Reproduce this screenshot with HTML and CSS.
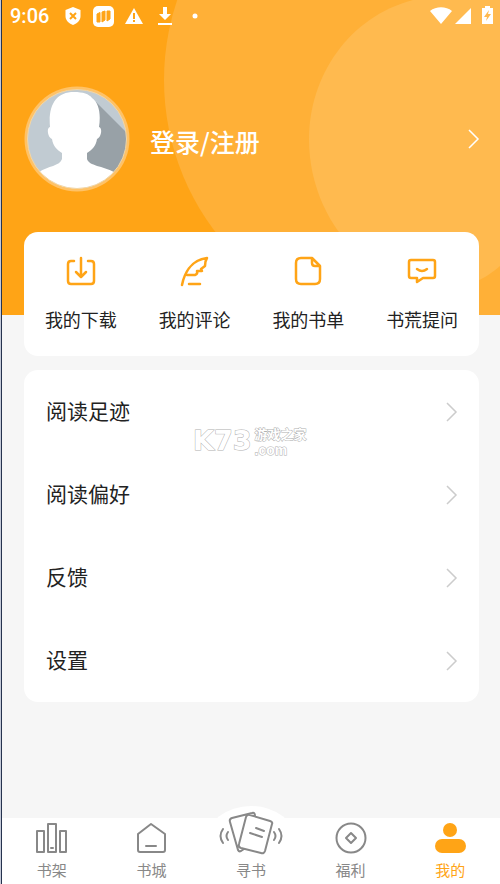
FILE: index.html
```html
<!DOCTYPE html>
<html lang="zh-CN">
<head>
<meta charset="utf-8">
<meta name="viewport" content="width=device-width, initial-scale=1">
<title>我的</title>
<link rel="stylesheet" href="styles.css">
</head>
<body>
<div class="app">
  <header class="hero">
    <svg class="hero-art" viewBox="0 0 498 315" preserveAspectRatio="xMaxYMin slice" aria-hidden="true">
      <circle cx="412" cy="80" r="250" fill="#ffb037"/>
      <path d="M411 0C346 17 307 77 307 139C307 222 370 289 442 289C465 289 484 278 498 266V0Z" fill="#ffba4f"/>
    </svg>
    <div class="status">
      <span class="time">9:06</span>
      <svg class="status-left" viewBox="0 0 140 22" aria-hidden="true">
        <path d="M9 2L16.500 5V11C16.500 15 13.500 18.500 9 20C4.500 18.500 1.500 15 1.500 11V5Z" fill="#fff"/>
        <path d="M6 8L12 14M12 8L6 14" stroke="#ffa416" stroke-width="2"/>
        <rect x="29" y="1" width="21" height="21" rx="5" fill="#fff"/>
        <path d="M33 9L36 7.500V17H33ZM38 7L41 6V15L38 17ZM43 6H46V14L43 16Z" fill="#ffa416" stroke="#ffa416"/>
        <path d="M70 3L79 19H61Z" fill="#fff"/>
        <path d="M70 8V14M70 15V17" stroke="#ffa416" stroke-width="2"/>
        <path d="M99 2H103V9H107L101 15L95 9H99ZM94 18H108V20H94Z" fill="#fff"/>
        <circle cx="131" cy="11" r="2.500" fill="#fff"/>
      </svg>
      <svg class="status-right" viewBox="0 0 64 20" aria-hidden="true">
        <path d="M0 5C6 0 16 0 22 5L11 18ZM25 18L41 2V18Z" fill="#fff"/>
        <path d="M52 2H55V0H60V2H63V18H52Z" fill="#fff"/>
        <path d="M59 4L54 11H57L56 15L61 8H58Z" fill="#ffba4f"/>
      </svg>
    </div>
    <a class="account" href="#login">
      <svg class="avatar" viewBox="0 0 106 106" aria-hidden="true">
        <defs><clipPath id="face"><circle cx="53" cy="53" r="49.500"/></clipPath></defs>
        <circle cx="53" cy="53" r="52.500" fill="#ffc266"/>
        <g clip-path="url(#face)">
          <path d="M0 0H106V106H0Z" fill="#c1cbd2"/>
          <path d="M72 16L106 50V106H60V60Z" fill="#98a1a7"/>
          <path d="M26 41C24 19 32 6 50 6C59 6 65 8 68 12C75 17 77 28 75 41C79 42 77 52 73 53C72 60 68 64 63 67V73C65 80 79 80 90 86V106H15V86C24 80 36 80 38 73V67C33 64 29 60 28 53C24 52 22 42 26 41Z" fill="#fff"/>
        </g>
        <circle cx="53" cy="53" r="49.500" fill="none" stroke="#f4d6a3"/>
      </svg>
      <span class="account-name">登录/注册</span>
      <svg class="chevron light" viewBox="0 0 12 20" aria-hidden="true"><path d="M1 1L10 10L1 19"/></svg>
    </a>
  </header>
  <main class="content">
    <nav class="card shortcuts" aria-label="快捷入口">
      <a href="#downloads">
        <svg viewBox="0 0 32 32" aria-hidden="true"><path d="M9 5H6Q3 5 3 8V25Q3 28 6 28H26Q29 28 29 25V8Q29 5 26 5H23M16 2V20M11 16L16 21L21 16"/></svg>
        <span>我的下载</span>
      </a>
      <a href="#comments">
        <svg viewBox="0 0 32 32" aria-hidden="true"><path d="M3 29C5 19 11 4 28 2Q26 5 26 10L22 13L23 15L18 15Q19 18 16 19H8M10 28H21"/></svg>
        <span>我的评论</span>
      </a>
      <a href="#lists">
        <svg viewBox="0 0 32 32" aria-hidden="true"><path d="M20 2H9Q4 2 4 7V23Q4 28 9 28H23Q28 28 28 23V10ZM20 2V7Q20 10 23 10H28"/></svg>
        <span>我的书单</span>
      </a>
      <a href="#questions">
        <svg viewBox="0 0 32 32" aria-hidden="true"><path d="M5 4H27Q29 4 29 6V20Q29 22 27 22H17L11 26V22H5Q3 22 3 20V6Q3 4 5 4ZM11 13Q16 17 21 13"/></svg>
        <span>书荒提问</span>
      </a>
    </nav>
    <nav class="card menu" aria-label="设置菜单">
      <a href="#history"><span>阅读足迹</span><svg class="chevron" viewBox="0 0 12 20" aria-hidden="true"><path d="M1 1L10 10L1 19"/></svg></a>
      <a href="#preferences"><span>阅读偏好</span><svg class="chevron" viewBox="0 0 12 20" aria-hidden="true"><path d="M1 1L10 10L1 19"/></svg></a>
      <a href="#feedback"><span>反馈</span><svg class="chevron" viewBox="0 0 12 20" aria-hidden="true"><path d="M1 1L10 10L1 19"/></svg></a>
      <a href="#settings"><span>设置</span><svg class="chevron" viewBox="0 0 12 20" aria-hidden="true"><path d="M1 1L10 10L1 19"/></svg></a>
      <div class="watermark">
        <span class="watermark-mark">K73</span>
        <div class="watermark-text"><span>游戏之家</span><span class="domain">.com</span></div>
      </div>
    </nav>
  </main>
  <nav class="tabs" aria-label="主导航">
    <a href="#shelf">
      <svg viewBox="0 0 64 41" aria-hidden="true"><path d="M17 13H24V34H17ZM28 6H36V34H28ZM40 13H46V34H40ZM31 30H33"/></svg>
      <span>书架</span>
    </a>
    <a href="#store">
      <svg viewBox="0 0 64 41" aria-hidden="true"><path d="M32 6L46 16V32Q46 34 44 34H21Q19 34 19 32V16ZM27 28H37"/></svg>
      <span>书城</span>
    </a>
    <a class="find" href="#find">
      <svg viewBox="0 0 64 41" aria-hidden="true"><path d="M36 -2Q36 -6 33 -5L13 0Q10 1 11 4L19 32Q20 34 22 33L25 31M31 -3L51 3Q54 4 53 6L46 33Q45 36 42 35L22 30Q19 29 20 26L27 -1Q28 -4 31 -3ZM37 10L45 13M31 15L43 19M9 14Q6 18 9 22M4 11Q-1 18 4 25M55 14Q58 18 55 22M60 11Q65 18 60 25"/></svg>
      <span>寻书</span>
    </a>
    <a href="#rewards">
      <svg viewBox="0 0 64 41" aria-hidden="true"><circle cx="32" cy="20" r="14.500"/><path d="M32 15L37 20L32 25L27 20Z"/></svg>
      <span>福利</span>
    </a>
    <a class="active" href="#me" aria-current="page">
      <svg viewBox="0 0 64 41" aria-hidden="true"><circle cx="32" cy="12" r="7"/><rect x="17" y="21" width="31" height="14" rx="7"/></svg>
      <span>我的</span>
    </a>
  </nav>
</div>
</body>
</html>
```

FILE: styles.css
```css
* { box-sizing: border-box; }

body {
  margin: 0;
  background: #f6f6f6;
  color: #222;
  font-family: "Noto Sans CJK SC", sans-serif;
}

a { color: inherit; text-decoration: none; }
svg { display: block; flex: none; overflow: visible; }

.app {
  min-height: 100vh;
  display: flex;
  flex-direction: column;
  border-left: 1px solid #c5cad8;
}

.hero,
.content,
.tabs { border-left: 1px solid #26334f; }

.hero {
  position: relative;
  height: 315px;
  background: #ffa416;
  color: #fff;
}

.hero-art {
  position: absolute;
  inset: 0;
  width: 100%;
  height: 100%;
  overflow: hidden;
}

.status {
  position: relative;
  display: flex;
  align-items: center;
  height: 32px;
  padding: 0 6px 0 8px;
}

.time { width: 54px; font: 500 20px/32px Roboto, sans-serif; }
.status-left { width: 140px; height: 22px; }
.status-right { width: 64px; height: 20px; margin-left: auto; }

.account {
  position: relative;
  display: flex;
  align-items: center;
  padding: 54px 20px 0 22px;
}

.avatar { width: 106px; height: 106px; }
.account-name { margin-left: 20px; padding-top: 4px; flex: 1; font-size: 25px; font-weight: 500; line-height: 36px; }

.chevron {
  width: 12px;
  height: 20px;
  fill: none;
  stroke: #ccc;
  stroke-width: 1.5;
}
.chevron.light { stroke: #fff; }

.content {
  position: relative;
  flex: 1;
  display: flex;
  flex-direction: column;
  gap: 14px;
  margin-top: -83px;
  padding: 0 21px 24px 22px;
}

.card { background: #fff; border-radius: 14px; }

.shortcuts { display: grid; grid-template-columns: repeat(4, 1fr); padding: 24px 0 23px; }
.shortcuts a { display: flex; flex-direction: column; align-items: center; gap: 17px; font-size: 18px; line-height: 28px; }
.shortcuts svg { width: 32px; height: 32px; fill: none; stroke: #ffa416; stroke-width: 2.5; stroke-linecap: round; stroke-linejoin: round; }

.menu { position: relative; }
.menu a { display: flex; align-items: center; justify-content: space-between; height: 83px; padding: 0 21px 0 22px; font-size: 21px; line-height: 30px; }
.menu a span { padding-bottom: 3px; }

.watermark { position: absolute; top: 55px; left: 169px; display: flex; align-items: center; gap: 3px; color: #fff; pointer-events: none; -webkit-text-stroke: 1px #b0b0b0; paint-order: stroke fill; }
.watermark-mark { font: 700 27px/32px "DejaVu Sans", sans-serif; }
.watermark-text { display: flex; flex-direction: column; font-size: 13px; font-weight: 700; line-height: 18px; }
.domain { font: 700 14px/14px "Liberation Sans", sans-serif; }

.tabs { display: grid; grid-template-columns: repeat(5, 1fr); height: 66px; background: #fff; color: #888; }
.tabs a { position: relative; display: flex; flex-direction: column; align-items: center; justify-content: space-between; padding-bottom: 3px; font-size: 15px; line-height: 22px; }
.tabs svg { position: relative; width: 64px; height: 41px; fill: none; stroke: #888; stroke-width: 2; stroke-linejoin: round; stroke-linecap: round; }
.find::before { content: ""; position: absolute; top: -12px; width: 90px; height: 70px; border-radius: 50%; background: #fff; }
.find span { position: relative; }
.tabs .active { color: #ffa416; }
.tabs .active svg { fill: #ffa416; stroke: none; }
```
